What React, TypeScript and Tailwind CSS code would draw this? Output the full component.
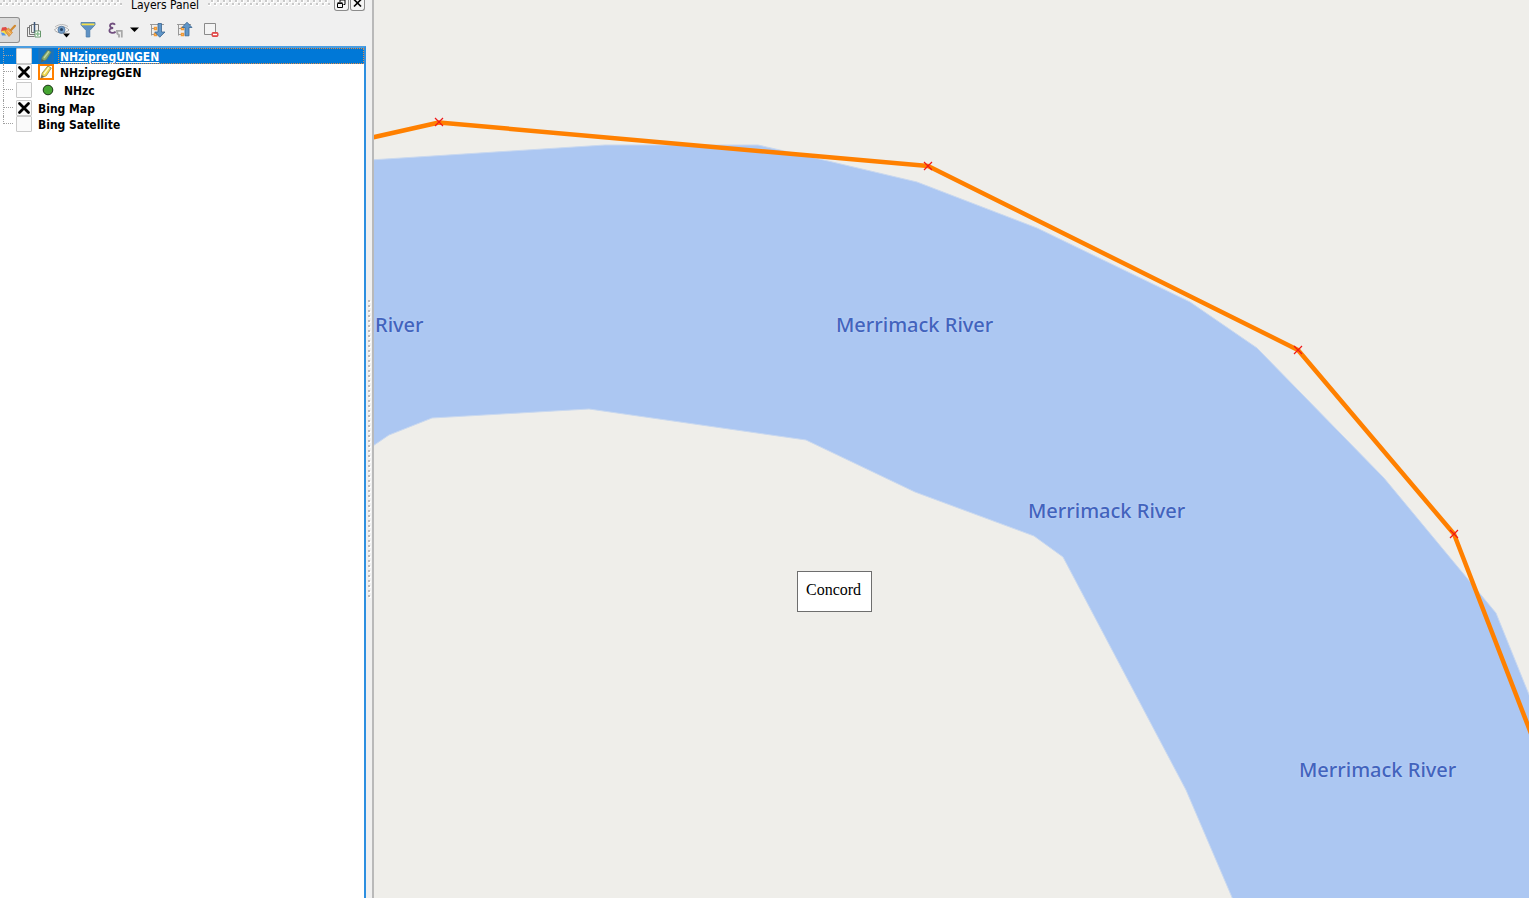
import type { ReactNode } from 'react';

type Layer = {
  name: string;
  checked: boolean;
  icon?: ReactNode;
  selected?: boolean;
  tall?: boolean;
};

const PencilIcon = ({ editing = false }: { editing?: boolean }) => (
  <svg width="16" height="16" viewBox="0 0 16 16" className="shrink-0">
    <rect
      x="1"
      y="1"
      width="14"
      height="14"
      fill={editing ? '#fff' : '#1473c4'}
      stroke={editing ? '#ff8000' : '#2a72b0'}
      strokeWidth={editing ? 2 : 1}
    />
    <path
      d="M3 14 4.2 9 9.8 2 13.3 4 8.3 11.8Z"
      fill={editing ? '#f0d94c' : '#86ab6c'}
      stroke={editing ? '#8d8748' : '#56796a'}
      strokeWidth="0.8"
    />
    <path d="M6 10 11 3.4" stroke={editing ? '#fffbd0' : '#c3d6a2'} strokeWidth="1.3" />
    <path d="M2.8 14.3 3.8 11 6.2 12.6Z" fill={editing ? '#666' : '#4c6468'} />
  </svg>
);

const PointIcon = () => (
  <svg width="20" height="16" viewBox="0 0 20 16" className="shrink-0">
    <circle cx="10" cy="8" r="4.8" fill="#46a532" stroke="#1c3418" />
  </svg>
);

const layers: Layer[] = [
  { name: 'NHzipregUNGEN', checked: false, selected: true, icon: <PencilIcon /> },
  { name: 'NHzipregGEN', checked: true, icon: <PencilIcon editing /> },
  { name: 'NHzc', checked: false, tall: true, icon: <PointIcon /> },
  { name: 'Bing Map', checked: true },
  { name: 'Bing Satellite', checked: false },
];

const Grip = ({ id }: { id: string }) => (
  <svg height="6" className="min-w-0 flex-1" aria-hidden="true">
    <defs>
      <pattern id={id} width="6" height="6" patternUnits="userSpaceOnUse">
        <path d="M0 3h3v3H0zM3 0h3v3H3z" fill="#fff" />
        <path d="M0 3h2v2H0zM3 0h2v2H3z" fill="#c9c9c9" />
      </pattern>
    </defs>
    <rect width="100%" height="6" fill={`url(#${id})`} />
  </svg>
);

const TitleBar = () => (
  <header className="flex h-3 shrink-0 items-start pr-px">
    <Grip id="grip-left" />
    <h1 className="w-[86px] text-center font-['DejaVu_Sans_Condensed','DejaVu_Sans',sans-serif] text-[12px] leading-[10px] whitespace-nowrap">
      Layers Panel
    </h1>
    <Grip id="grip-right" />
    <div className="flex gap-px pl-1">
      <button
        type="button"
        aria-label="Float panel"
        className="flex h-[11px] w-[15px] items-start justify-center rounded-b-[3px] border border-t-0 border-[#8b8b8b] bg-[#f4f4f4]"
      >
        <svg width="9" height="8" viewBox="0 0 9 8">
          <path d="M3 0h5v4.5H6.5M3 0v2" fill="none" stroke="#000" />
          <path d="M.5 3.5h5v4h-5zM.5 2.8h5" fill="none" stroke="#000" />
        </svg>
      </button>
      <button
        type="button"
        aria-label="Close panel"
        className="flex h-[11px] w-[15px] items-start justify-center rounded-b-[3px] border border-t-0 border-[#8b8b8b] bg-[#f4f4f4]"
      >
        <svg width="9" height="8" viewBox="0 0 9 8">
          <path d="M1 -.5 8 6.5M8 -.5 1 6.5" stroke="#000" strokeWidth="1.7" />
        </svg>
      </button>
    </div>
  </header>
);

const TOOL = 'flex h-[26px] items-center justify-center';

const Toolbar = () => (
  <div className="flex h-[34px] shrink-0 items-center pt-0.5" role="toolbar" aria-label="Layers">
    <button
      type="button"
      aria-label="Style dock"
      className="flex h-[26px] w-5 items-center rounded-r-[3px] border border-l-0 border-[#8f8f8f] bg-[#dadada]"
    >
      <svg width="17" height="18" viewBox="0 0 17 18" className="shrink-0">
        <path d="M2 6.5 6 6 8 9 4 11 1 10.5Z" fill="#e04a45" />
        <path d="M1 10 5 9.5 8 12 5 14Z" fill="#f7df4a" />
        <path d="M1 11.5 4 12 6 14.5 2 14.5Z" fill="#5a97e4" />
        <path d="M5 10 8.5 7 12.5 11.5 9 15.5Z" fill="#eda54a" stroke="#c98233" strokeWidth="0.7" />
        <path d="M7.5 9.5 11 13" stroke="#f6c988" strokeWidth="0.8" />
        <path d="M11 9 15 4.8" stroke="#d08a33" strokeWidth="2.2" strokeLinecap="round" />
      </svg>
    </button>
    <button type="button" aria-label="Add group" className={`${TOOL} w-7`}>
      <svg width="16" height="18" viewBox="0 0 16 18" fill="none" stroke="#777">
        <path d="M3.5 6.5h-2v9h7M5.5 4.5h-2v9h6M5.5 3.5h7v8h-7z" />
        <path d="M8.5 1v11" stroke="#3f587a" strokeWidth="1.5" />
        <path d="M9 10h5.5v6H9z" fill="#fff" stroke="#67986c" />
        <path d="M11.8 11v4M9.8 13h4" stroke="#8bbf90" strokeWidth="1.4" />
      </svg>
    </button>
    <button type="button" aria-label="Manage layer visibility" className={`${TOOL} w-7`}>
      <svg width="16" height="18" viewBox="0 0 16 18">
        <path d="M.5 9C4 4.5 11 4.5 15 9 11 13 4 13 .5 9Z" fill="#f8f8f8" stroke="#a5a5a5" />
        <path d="M1 6C5 2.8 10 2.8 14 5.5" fill="none" stroke="#b8b8b8" />
        <circle cx="7.5" cy="8.8" r="3.6" fill="#729bc5" stroke="#4d749d" strokeWidth="0.7" />
        <circle cx="7.5" cy="8.6" r="1.5" fill="#244263" />
        <path d="M9 12.5h7L12.5 16.5z" fill="#000" />
      </svg>
    </button>
    <button type="button" aria-label="Filter legend" className={`${TOOL} w-6`}>
      <svg width="16" height="18" viewBox="0 0 16 18">
        <path d="M1 4 6.2 9.5V16h3.6V9.5L15 4V1.5H1z" fill="#5e91c4" stroke="#477bab" strokeWidth="0.8" />
        <path d="M1.5 2.5h13v1.8h-13z" fill="#f6e04b" />
      </svg>
    </button>
    <button type="button" aria-label="Filter by expression" className={`${TOOL} w-12`}>
      <svg width="32" height="18" viewBox="0 0 32 18">
        <path
          d="M7 3.8C5.8 1.8 2 2.2 2 4.8 2 6.2 3.2 7 5.2 7 2.8 7 1.4 8 1.4 9.6 1.4 12.4 6 12.6 7.6 10.6"
          fill="none"
          stroke="#704e7e"
          strokeWidth="1.8"
        />
        <path d="M8 9.8h6.5M9.3 9.5v3l1.7 1.5v2.5M13.8 9.5V16.5" fill="none" stroke="#a8a8a8" strokeWidth="1.8" />
        <path d="M22 6.5h9L26.5 11z" fill="#000" />
      </svg>
    </button>
    <button type="button" aria-label="Expand all" className={`${TOOL} w-5`}>
      <svg width="16" height="18" viewBox="0 0 16 18">
        <path d="M1.5 3v11.500M1.500 7.500h3M1.500 13.500h3M0 3.500h14" fill="none" stroke="#999" />
        <path d="M4.500 6.500h2v2h-2zM4.500 12.500h2v2h-2z" fill="#fff3dc" stroke="#f29a35" strokeWidth="1.400" />
        <path d="M8 2.500h3.500V11H15L9.750 16.200 4.700 11H8z" fill="#6096c8" stroke="#3a6590" strokeWidth="0.800" />
      </svg>
    </button>
    <button type="button" aria-label="Collapse all" className={`${TOOL} w-[34px]`}>
      <svg width="16" height="18" viewBox="0 0 16 18">
        <path d="M1.500 3v11.500M1.500 7.500h3M1.500 13.500h3M0 3.500h14" fill="none" stroke="#999" />
        <path d="M4.500 6.500h2v2h-2zM4.500 12.500h2v2h-2z" fill="#fff3dc" stroke="#f29a35" strokeWidth="1.400" />
        <path d="M8 14.800h4V6.500H15L10 1.200 5 6.500H8z" fill="#6096c8" stroke="#3a6590" strokeWidth="0.800" />
      </svg>
    </button>
    <button type="button" aria-label="Remove layer" className={`${TOOL} w-5`}>
      <svg width="16" height="18" viewBox="0 0 16 18">
        <path d="M.5 2.500h11v11H.5z" fill="#f4f4f4" stroke="#8b8b8b" />
        <rect x="8" y="11.500" width="6" height="4" rx="1" fill="#e35050" stroke="#e04848" />
        <path d="M9 13.500h4" stroke="#fff" strokeWidth="1.300" />
      </svg>
    </button>
  </div>
);

const LayerRow = ({ layer, last }: { layer: Layer; last: boolean }) => (
  <li
    className={`flex items-center ${layer.tall ? 'h-5' : 'h-4'} ${
      layer.selected ? 'bg-[#0078d7] text-white' : 'text-black'
    }`}
  >
    <span className="flex w-4 shrink-0 self-stretch pl-[3px]" aria-hidden="true">
      <span className={`border-l border-dotted border-[#a0a0a0] ${last ? 'h-1/2' : 'h-full'}`} />
      <span className="h-1/2 w-[9px] border-b border-dotted border-[#a0a0a0]" />
    </span>
    <label className="flex flex-1 items-center whitespace-nowrap">
      <span className="grid size-4 shrink-0">
        <input
          type="checkbox"
          defaultChecked={layer.checked}
          className="peer col-start-1 row-start-1 size-4 appearance-none rounded-[1px] border border-[#c9c9c9] bg-[#fafafa]"
        />
        <svg
          viewBox="0 0 16 16"
          className="pointer-events-none invisible col-start-1 row-start-1 size-4 peer-checked:visible"
        >
          <path d="M3.5 3.5 12.5 12.5M12.5 3.5 3.5 12.5" stroke="#000" strokeWidth="2.8" strokeLinecap="round" />
        </svg>
      </span>
      <span className="flex flex-1 items-center gap-1 pl-1.5">
        {layer.icon}
        <span
          className={`h-4 flex-1 pt-px ${layer.icon ? 'pl-0.5' : ''} ${
            layer.selected
              ? 'underline outline-1 -outline-offset-1 outline-dotted outline-[#e08b45]'
              : ''
          }`}
        >
          {layer.name}
        </span>
      </span>
    </label>
  </li>
);

const LayersPanel = () => (
  <aside className="flex w-[366px] shrink-0 flex-col bg-[#f0f0f0]">
    <TitleBar />
    <Toolbar />
    <ul className="flex-1 border-t-2 border-r-2 border-t-[#4b9de0] border-r-[#2d8fe0] bg-white font-['DejaVu_Sans_Condensed','DejaVu_Sans',sans-serif] text-[12px] leading-4 font-bold">
      {layers.map((layer, i) => (
        <LayerRow key={layer.name} layer={layer} last={i === layers.length - 1} />
      ))}
    </ul>
  </aside>
);

const Splitter = () => (
  <div className="flex w-2 shrink-0 items-center border-r-2 border-[#b9b9b9] bg-[#f0f0f0]">
    <svg width="6" height="300" aria-hidden="true">
      <defs>
        <pattern id="splitter-dots" width="6" height="5" patternUnits="userSpaceOnUse">
          <path d="M3 2h2v2H3z" fill="#fff" />
          <path d="M2 1h2v2H2z" fill="#bcbcbc" />
        </pattern>
      </defs>
      <rect width="6" height="300" fill="url(#splitter-dots)" />
    </svg>
  </div>
);

const vertices = [
  [439, 122],
  [928, 166],
  [1298, 350],
  [1454, 534],
];

const RIVER_LABEL =
  "absolute font-['Noto_Sans',sans-serif] text-[20px] leading-7 font-medium whitespace-nowrap text-[#4263bd] [text-shadow:0_0_2px_#c9daf8]";

const MapCanvas = () => (
  <main className="relative min-w-0 flex-1 overflow-hidden bg-[#efeeea]">
    <svg
      viewBox="374 0 1155 898"
      preserveAspectRatio="xMinYMin slice"
      className="block size-full"
      role="img"
      aria-label="Merrimack River at Concord"
    >
      <path
        d="M370 160 605 145H758L828 161 917 182 1037 228 1190 302 1257 348 1384 478 1496 613 1532 702V902H1234L1186 790 1063 557 1034 536 915 492 806 440 589 409 432 418 389 435 370 448Z"
        fill="#acc7f2"
        stroke="#c9d8ef"
      />
      <path
        d="M370 138 439 122.5 928 166 1298 350 1454 534 1532 736"
        fill="none"
        stroke="#ff8000"
        strokeWidth="4.5"
        strokeLinejoin="round"
      />
      {vertices.map(([x, y]) => (
        <path
          key={x}
          d={`M${x - 4} ${y - 4}l8 8M${x + 4} ${y - 4}l-8 8`}
          stroke="#f01818"
          strokeWidth="1.2"
        />
      ))}
    </svg>
    <span className={`${RIVER_LABEL} top-[311px] left-px`}>River</span>
    <span className={`${RIVER_LABEL} top-[311px] left-[462px]`}>Merrimack River</span>
    <span className={`${RIVER_LABEL} top-[497px] left-[654px]`}>Merrimack River</span>
    <span className={`${RIVER_LABEL} top-[756px] left-[925px]`}>Merrimack River</span>
    <div className="absolute top-[571px] left-[423px] h-[41px] w-[75px] border border-[#6e6e6e] bg-white pt-2 pl-2 font-['Liberation_Serif',serif] text-[16px] leading-5 text-black">
      Concord
    </div>
  </main>
);

const App = () => (
  <div className="flex h-screen overflow-hidden">
    <LayersPanel />
    <Splitter />
    <MapCanvas />
  </div>
);

export default App;
